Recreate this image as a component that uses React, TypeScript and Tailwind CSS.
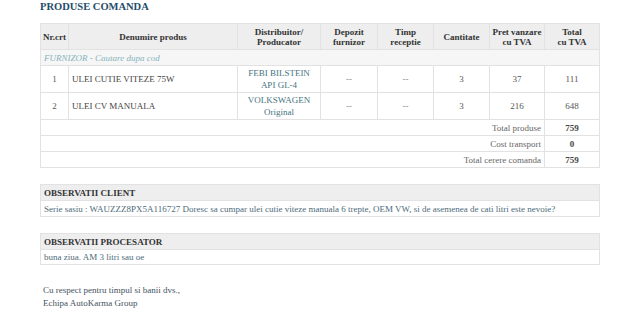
import React from "react";

const headers = [
  { label: ["Nr.crt"], w: "w-[28px]" },
  { label: ["Denumire produs"], w: "w-[169px]" },
  { label: ["Distribuitor/", "Producator"], w: "w-[83px]" },
  { label: ["Depozit", "furnizor"], w: "w-[57px]" },
  { label: ["Timp", "receptie"], w: "w-[56px]" },
  { label: ["Cantitate"], w: "w-[56px]" },
  { label: ["Pret vanzare", "cu TVA"], w: "w-[55px]" },
  { label: ["Total", "cu TVA"], w: "w-[55px]" },
];

const products = [
  { nr: 1, name: "ULEI CUTIE VITEZE 75W", dist: ["FEBI BILSTEIN", "API GL-4"], qty: 3, price: 37, total: 111 },
  { nr: 2, name: "ULEI CV MANUALA", dist: ["VOLKSWAGEN", "Original"], qty: 3, price: 216, total: 648 },
];

const totals = [
  { label: "Total produse", value: "759" },
  { label: "Cost transport", value: "0" },
  { label: "Total cerere comanda", value: "759" },
];

const cell = "border border-[#e2e2e2] px-[3px] py-0";

const App: React.FC = () => {
  return (
    <div className="w-[640px] h-[326px] bg-white overflow-hidden font-['Liberation_Serif',serif] text-[9px] leading-[10px] text-[#555]">
      <div className="w-[560px] ml-[40px]">
        {/* title */}
        <h1 className="h-[23px] pt-px text-[10.5px] leading-[12px] font-bold text-[#1f4d6b]">
          PRODUSE COMANDA
        </h1>

        {/* products table */}
        <table className="w-[560px] border-collapse table-fixed">
          <thead>
            <tr className="h-[26px] bg-[#eeeeee]">
              {headers.map((h, i) => (
                <th
                  key={i}
                  className={`border border-[#e2e2e2] px-0 py-0 ${h.w} text-center font-bold text-[#333] whitespace-nowrap`}
                >
                  {h.label.map((l, j) => (
                    <div key={j}>{l}</div>
                  ))}
                </th>
              ))}
            </tr>
          </thead>
          <tbody>
            <tr className="h-[16px] bg-[#f6f6f6]">
              <td colSpan={8} className={`${cell} italic text-[#86b4bc]`}>
                FURNIZOR - Cautare dupa cod
              </td>
            </tr>
            {products.map((p) => (
              <tr key={p.nr} className="h-[27px]">
                <td className={`${cell} text-center`}>{p.nr}</td>
                <td className={`${cell} text-[#444]`}>{p.name}</td>
                <td className={`${cell} text-center text-[#467480]`}>
                  <div>{p.dist[0]}</div>
                  <div className="mt-[2px]">{p.dist[1]}</div>
                </td>
                <td className={`${cell} text-center text-[#888]`}>--</td>
                <td className={`${cell} text-center text-[#888]`}>--</td>
                <td className={`${cell} text-center`}>{p.qty}</td>
                <td className={`${cell} text-center`}>{p.price}</td>
                <td className={`${cell} text-center`}>{p.total}</td>
              </tr>
            ))}
            {totals.map((t) => (
              <tr key={t.label} className="h-[16px]">
                <td colSpan={7} className={`${cell} text-right text-[#666]`}>
                  {t.label}
                </td>
                <td className={`${cell} text-center font-bold text-[#444]`}>{t.value}</td>
              </tr>
            ))}
          </tbody>
        </table>

        {/* observatii client */}
        <div className="mt-[16px] border border-[#e2e2e2]">
          <div className="h-[16px] bg-[#eeeeee] px-[3px] flex items-center font-bold text-[#333] border-b border-[#e2e2e2]">
            OBSERVATII CLIENT
          </div>
          <div className="h-[15px] px-[3px] flex items-center text-[#4d6b7a]">
            Serie sasiu : WAUZZZ8PX5A116727 Doresc sa cumpar ulei cutie viteze manuala 6 trepte, OEM VW, si de asemenea de cati litri este nevoie?
          </div>
        </div>

        {/* observatii procesator */}
        <div className="mt-[16px] border border-[#e2e2e2]">
          <div className="h-[16px] bg-[#eeeeee] px-[3px] flex items-center font-bold text-[#333] border-b border-[#e2e2e2]">
            OBSERVATII PROCESATOR
          </div>
          <div className="h-[14px] px-[3px] flex items-center text-[#4d6b7a]">
            buna ziua. AM 3 litri sau oe
          </div>
        </div>

        {/* footer */}
        <div className="mt-[19px] px-[3px] text-[#44525e] leading-[13px]">
          <div>Cu respect pentru timpul si banii dvs.,</div>
          <div>Echipa AutoKarma Group</div>
        </div>
      </div>
    </div>
  );
};

export default App;
